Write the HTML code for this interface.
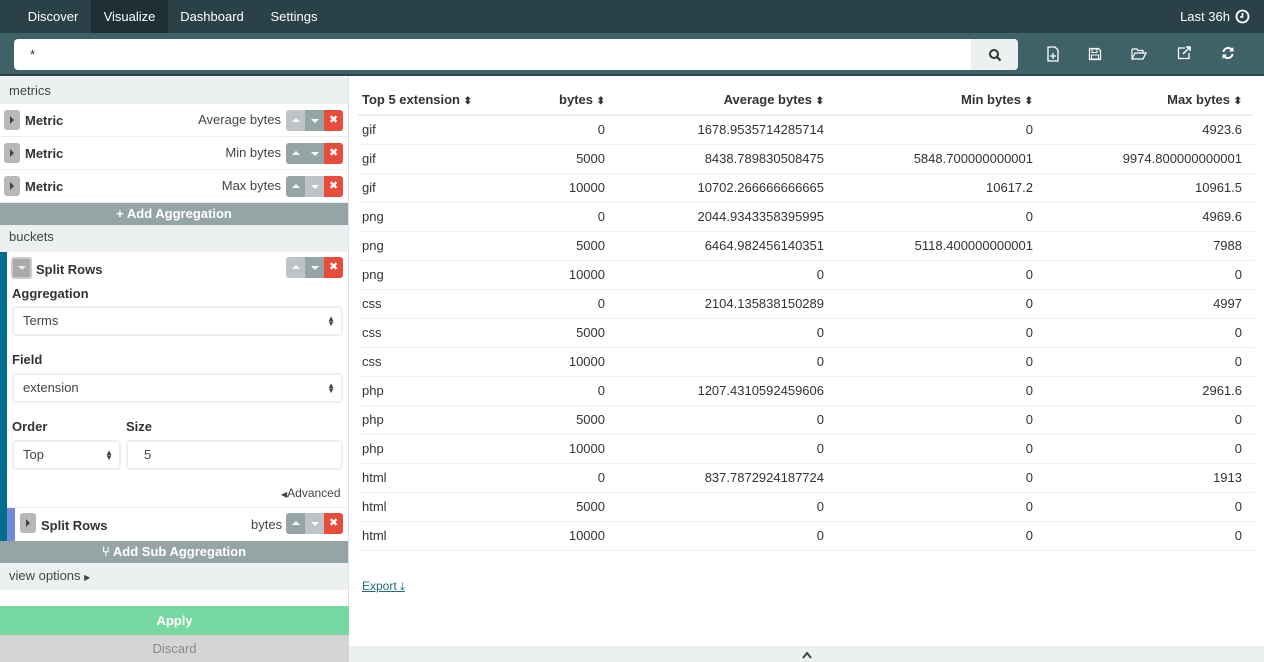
<!DOCTYPE html><html><head><style>
*{box-sizing:border-box;margin:0;padding:0}
body{width:1264px;height:662px;overflow:hidden;font-family:"Liberation Sans",sans-serif;font-size:13px;color:#444;background:#fff;position:relative}
.abs{position:absolute}
.nav{left:0;top:0;width:1264px;height:33px;background:#2b4148}
.nav span{position:absolute;top:0;height:33px;line-height:33px;color:#fff;font-size:13px;text-align:center}
.tb{left:0;top:33px;width:1264px;height:43px;background:#3f6168;border-bottom:2px solid #2b4148}
.lp{left:0;top:76px;width:349px;height:586px;border-right:1px solid #dde;}
.sec{position:absolute;left:0;width:348px;background:#ecf0f1;padding-left:9px;font-size:13px}
.row{position:absolute;left:0;width:348px;height:33px;border-bottom:1px solid #ecf0f1;background:#fff}
.tog{position:absolute;width:16px;height:20px;background:#b8b8b8;border-radius:3px}
.tog:after{content:"";position:absolute;left:6px;top:6px;border-left:4px solid #444;border-top:4px solid transparent;border-bottom:4px solid transparent}
.btns{position:absolute;width:57px;height:21px;border-radius:3px;overflow:hidden}
.btns i{position:absolute;top:0;height:21px;width:19px}
.btns i.u:after{content:"";position:absolute;left:6px;top:8px;border-bottom:4px solid #fff;border-left:4px solid transparent;border-right:4px solid transparent}
.btns i.d:after{content:"";position:absolute;left:6px;top:9px;border-top:4px solid #fff;border-left:4px solid transparent;border-right:4px solid transparent}
.btns i.x:after{content:"✖";position:absolute;left:5px;top:3px;color:#fff;font-size:11px;font-style:normal}
.bar{position:absolute;left:0;width:348px;height:22px;background:#95a5a6;color:#fff;text-align:center;line-height:22px;font-weight:bold}
.b{font-weight:bold;color:#333}
.inp{position:absolute;height:30px;border:2px solid #ecf0f1;border-radius:4px;padding-left:9px;line-height:26px;font-size:13px;color:#444}
.arr{position:absolute;right:6px;top:8px;font-size:8px;line-height:5px;color:#444}
table{position:absolute;left:358px;top:85px;width:896px;border-collapse:collapse;font-size:13px}
td,th{height:29px;padding:0 4px;border-bottom:1px solid #ecf0f1;white-space:nowrap;color:#333}
th{font-weight:bold;border-bottom:2px solid #ecf0f1;height:30px}
td.r,th.r{text-align:right;padding-right:4px}
td.l,th.l{text-align:right;padding-right:12px}
.srt{font-size:10px}
</style></head><body>
<div class="abs nav">
<span style="left:18px;width:70px">Discover</span>
<span style="left:91px;width:77px;background:#1e3036">Visualize</span>
<span style="left:168px;width:88px">Dashboard</span>
<span style="left:256px;width:76px">Settings</span>
<span style="left:1178px;width:54px">Last 36h</span>
<svg class="abs" style="left:1235px;top:9px" width="15" height="15" viewBox="0 0 15 15"><circle cx="7.5" cy="7.5" r="6" fill="none" stroke="#fff" stroke-width="1.8"/><path d="M7.5 4v4H5" fill="none" stroke="#fff" stroke-width="1.6"/></svg>
</div>
<div class="abs tb">
<div class="abs" style="left:14px;top:6px;width:1004px;height:31px;background:#fff;border-radius:4px"></div>
<div class="abs" style="left:30px;top:14px;color:#333;font-size:13px">*</div>
<div class="abs" style="left:971px;top:6px;width:47px;height:31px;background:#ecf0f1;border-radius:0 4px 4px 0"></div>
<svg class="abs" style="left:988px;top:15px" width="14" height="14" viewBox="0 0 14 14"><circle cx="6" cy="6" r="4" fill="none" stroke="#333" stroke-width="2"/><path d="M9 9l3.5 3.5" stroke="#333" stroke-width="2.2"/></svg>
<svg class="abs" style="left:1046px;top:13px" width="14" height="16" viewBox="0 0 14 16"><path d="M2 1h7l3 3v11H2z" fill="none" stroke="#fff" stroke-width="1.3"/><path d="M7 7v6M4 10h6" stroke="#fff" stroke-width="1.3"/></svg>
<svg class="abs" style="left:1088px;top:14px" width="14" height="14" viewBox="0 0 14 14"><path d="M1.5 1.5h9l2 2v9h-11z" fill="none" stroke="#fff" stroke-width="1.3"/><rect x="4" y="2" width="5" height="3.5" fill="none" stroke="#fff"/><rect x="3.5" y="8" width="7" height="4" fill="none" stroke="#fff"/></svg>
<svg class="abs" style="left:1131px;top:14px" width="16" height="13" viewBox="0 0 16 13"><path d="M1 2h5l1 1.5h5V6M1 2v10h11l3-6H4l-3 6" fill="none" stroke="#fff" stroke-width="1.2"/></svg>
<svg class="abs" style="left:1177px;top:13px" width="15" height="14" viewBox="0 0 15 14"><path d="M8 2H1.5v10.5H12V7" fill="none" stroke="#fff" stroke-width="1.3"/><path d="M6 8l7-7M9 1h4v4" fill="none" stroke="#fff" stroke-width="1.5"/></svg>
<svg class="abs" style="left:1221px;top:13px" width="14" height="14" viewBox="0 0 14 14"><path d="M2.5 6a4.7 4.7 0 0 1 8.5-2M11.5 8a4.7 4.7 0 0 1-8.5 2" fill="none" stroke="#fff" stroke-width="2"/><path d="M12.5 1v4.5H8zM1.5 13V8.5H6z" fill="#fff"/></svg>
</div>

<div class="abs lp">
<div class="sec" style="top:1px;height:27px;line-height:27px">metrics</div>
<div class="row" style="top:28px"><div class="tog" style="left:4px;top:6px"></div><span class="abs b" style="left:25px;top:9px">Metric</span><span class="abs" style="right:67px;top:8px">Average bytes</span>
<div class="btns" style="left:286px;top:6px"><i class="u" style="left:0;background:#bdc3c7"></i><i class="d" style="left:19px;background:#95a5a6"></i><i class="x" style="left:38px;background:#e74c3c"></i></div></div>
<div class="row" style="top:61px"><div class="tog" style="left:4px;top:6px"></div><span class="abs b" style="left:25px;top:9px">Metric</span><span class="abs" style="right:67px;top:8px">Min bytes</span>
<div class="btns" style="left:286px;top:6px"><i class="u" style="left:0;background:#95a5a6"></i><i class="d" style="left:19px;background:#95a5a6"></i><i class="x" style="left:38px;background:#e74c3c"></i></div></div>
<div class="row" style="top:94px"><div class="tog" style="left:4px;top:6px"></div><span class="abs b" style="left:25px;top:9px">Metric</span><span class="abs" style="right:67px;top:8px">Max bytes</span>
<div class="btns" style="left:286px;top:6px"><i class="u" style="left:0;background:#95a5a6"></i><i class="d" style="left:19px;background:#bdc3c7"></i><i class="x" style="left:38px;background:#e74c3c"></i></div></div>
<div class="bar" style="top:127px">+ Add Aggregation</div>
<div class="sec" style="top:149px;height:27px;line-height:24px">buckets</div>
<div class="abs" style="left:0;top:176px;width:7px;height:289px;background:#006e8a"></div>
<div class="abs" style="left:11px;top:181px;width:21px;height:22px;background:#aaa;border:2px solid #ccc;border-radius:3px"></div>
<div class="abs" style="left:18px;top:190px;border-top:4px solid #eee;border-left:4px solid transparent;border-right:4px solid transparent"></div>
<span class="abs b" style="left:36px;top:186px">Split Rows</span>
<div class="btns" style="left:286px;top:181px"><i class="u" style="left:0;background:#bdc3c7"></i><i class="d" style="left:19px;background:#95a5a6"></i><i class="x" style="left:38px;background:#e74c3c"></i></div>
<span class="abs b" style="left:12px;top:210px">Aggregation</span>
<div class="inp" style="left:12px;top:230px;width:331px">Terms<span class="arr">▲<br>▼</span></div>
<span class="abs b" style="left:12px;top:276px">Field</span>
<div class="inp" style="left:12px;top:297px;width:331px">extension<span class="arr">▲<br>▼</span></div>
<span class="abs b" style="left:12px;top:343px">Order</span>
<span class="abs b" style="left:126px;top:343px">Size</span>
<div class="inp" style="left:12px;top:364px;width:109px">Top<span class="arr">▲<br>▼</span></div>
<div class="inp" style="left:126px;top:364px;width:217px;padding-left:16px">5</div>
<span class="abs" style="left:281px;top:410px;font-size:12px"><span style="font-size:8px">◀</span>Advanced</span>
<div class="abs" style="left:7px;top:431px;width:341px;height:34px;border-top:1px solid #ecf0f1"></div>
<div class="abs" style="left:7px;top:432px;width:8px;height:33px;background:#7289d8"></div>
<div class="tog" style="left:20px;top:437px"></div>
<span class="abs b" style="left:41px;top:442px">Split Rows</span>
<span class="abs" style="left:251px;top:441px">bytes</span>
<div class="btns" style="left:286px;top:437px"><i class="u" style="left:0;background:#95a5a6"></i><i class="d" style="left:19px;background:#bdc3c7"></i><i class="x" style="left:38px;background:#e74c3c"></i></div>
<div class="bar" style="top:465px">⑂ Add Sub Aggregation</div>
<div class="sec" style="top:487px;height:27px;line-height:25px">view options <span style="font-size:8px">▶</span></div>
<div class="abs" style="left:0;top:530px;width:349px;height:29px;background:#78d8a1;color:#fff;font-weight:bold;text-align:center;line-height:29px">Apply</div>
<div class="abs" style="left:0;top:559px;width:349px;height:27px;background:#d5d5d5;color:#888;text-align:center;line-height:27px">Discard</div>
</div>

<table>
<tr><th style="text-align:left">Top 5 extension <span class="srt">⬍</span></th><th class="r">bytes <span class="srt">⬍</span></th><th class="r">Average bytes <span class="srt">⬍</span></th><th class="r">Min bytes <span class="srt">⬍</span></th><th class="l">Max bytes <span class="srt">⬍</span></th></tr>
<tr><td style="width:160px">gif</td><td class="r" style="width:91px">0</td><td class="r" style="width:219px">1678.9535714285714</td><td class="r" style="width:209px">0</td><td class="l">4923.6</td></tr>
<tr><td>gif</td><td class="r">5000</td><td class="r">8438.789830508475</td><td class="r">5848.700000000001</td><td class="l">9974.800000000001</td></tr>
<tr><td>gif</td><td class="r">10000</td><td class="r">10702.266666666665</td><td class="r">10617.2</td><td class="l">10961.5</td></tr>
<tr><td>png</td><td class="r">0</td><td class="r">2044.9343358395995</td><td class="r">0</td><td class="l">4969.6</td></tr>
<tr><td>png</td><td class="r">5000</td><td class="r">6464.982456140351</td><td class="r">5118.400000000001</td><td class="l">7988</td></tr>
<tr><td>png</td><td class="r">10000</td><td class="r">0</td><td class="r">0</td><td class="l">0</td></tr>
<tr><td>css</td><td class="r">0</td><td class="r">2104.135838150289</td><td class="r">0</td><td class="l">4997</td></tr>
<tr><td>css</td><td class="r">5000</td><td class="r">0</td><td class="r">0</td><td class="l">0</td></tr>
<tr><td>css</td><td class="r">10000</td><td class="r">0</td><td class="r">0</td><td class="l">0</td></tr>
<tr><td>php</td><td class="r">0</td><td class="r">1207.4310592459606</td><td class="r">0</td><td class="l">2961.6</td></tr>
<tr><td>php</td><td class="r">5000</td><td class="r">0</td><td class="r">0</td><td class="l">0</td></tr>
<tr><td>php</td><td class="r">10000</td><td class="r">0</td><td class="r">0</td><td class="l">0</td></tr>
<tr><td>html</td><td class="r">0</td><td class="r">837.7872924187724</td><td class="r">0</td><td class="l">1913</td></tr>
<tr><td>html</td><td class="r">5000</td><td class="r">0</td><td class="r">0</td><td class="l">0</td></tr>
<tr><td>html</td><td class="r">10000</td><td class="r">0</td><td class="r">0</td><td class="l">0</td></tr>
</table>
<div class="abs" style="left:362px;top:579px;font-size:12px;color:#1f6b7a;text-decoration:underline">Export <span style="font-size:11px">⤓</span></div>
<div class="abs" style="left:349px;top:646px;width:915px;height:16px;background:#ecf0f1"></div>
<svg class="abs" style="left:802px;top:651px" width="10" height="8" viewBox="0 0 10 8"><path d="M1 7l4-5 4 5" fill="none" stroke="#444" stroke-width="2"/></svg>
</body></html>
